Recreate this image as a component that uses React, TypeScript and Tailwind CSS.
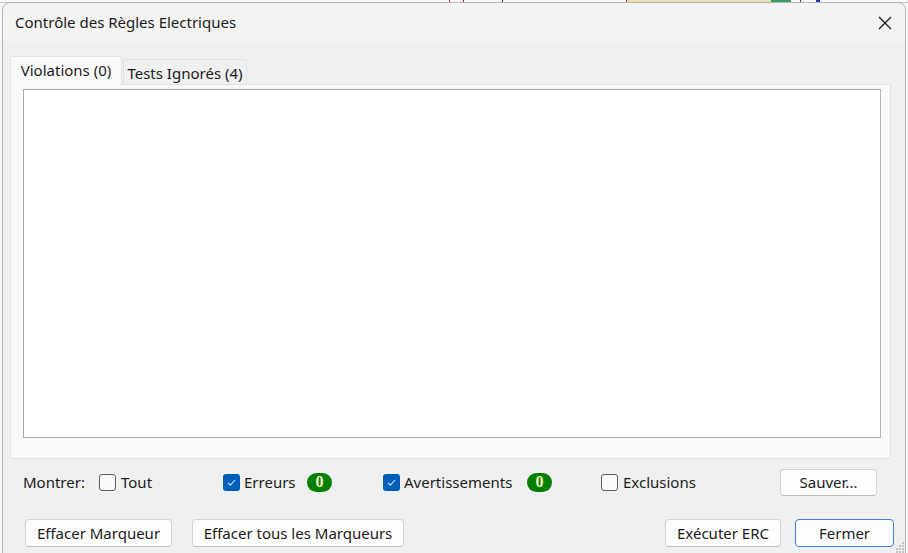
import React from 'react';

const font = { fontFamily: '"Segoe UI", "Noto Sans", "Open Sans", sans-serif' };

const Checkbox: React.FC<{ checked?: boolean }> = ({ checked }) =>
  checked ? (
    <span className="flex h-[17px] w-[17px] shrink-0 items-center justify-center rounded-[3px] bg-[#005fb8]">
      <svg width="11" height="11" viewBox="0 0 11 11" fill="none">
        <path d="M2 5.8 L4.4 8.2 L9 3" stroke="#cfe3f7" strokeWidth="1.1" />
      </svg>
    </span>
  ) : (
    <span className="h-[17px] w-[17px] shrink-0 rounded-[3px] border border-[#5c5c5c] bg-[#f9f9f9]" />
  );

const Badge: React.FC = () => (
  <span
    className="flex h-[19px] w-[25px] items-center justify-center rounded-full bg-[#008000] text-[16px] font-bold leading-none text-[#f4f4c0]"
    style={{ fontFamily: '"Liberation Serif", serif' }}
  >
    0
  </span>
);

const Button: React.FC<{ w: string; h?: string; primary?: boolean; children: React.ReactNode }> = ({
  w,
  h = 'h-[28px]',
  primary,
  children,
}) => (
  <button
    className={`${w} ${h} flex items-center justify-center rounded-[4px] border bg-[#fdfdfd] text-[15px] text-[#1b1b1b] ${
      primary ? 'border-[#3b82d8]' : 'border-[#d5d5d5] border-b-[#bfbfbf]'
    }`}
  >
    {children}
  </button>
);

export default function App() {
  return (
    <div className="relative h-[553px] w-[908px] overflow-hidden bg-[#f7f7f7]" style={font}>
      {/* underlying app strip */}
      <div className="absolute left-0 top-0 h-[3px] w-[908px] border-b border-[#c8c8c8]">
        <span className="absolute left-[449px] top-0 h-[3px] w-px bg-[#b03030]" />
        <span className="absolute left-[463px] top-0 h-[3px] w-px bg-[#b03030]" />
        <span className="absolute left-[502px] top-0 h-[3px] w-px bg-[#2020d0]" />
        <span className="absolute left-[626px] top-0 h-[3px] w-[145px] border-l border-[#b03030] bg-[#e8e2a8]" />
        <span className="absolute left-[771px] top-0 h-[3px] w-[20px] bg-[#3a9a60]" />
        <span className="absolute left-[800px] top-0 h-[3px] w-px bg-[#b03030]" />
        <span className="absolute left-[816px] top-0 h-[3px] w-[4px] bg-[#3030c0]" />
      </div>

      <div className="absolute left-[2px] top-[2px] flex h-[560px] w-[904px] flex-col rounded-t-[8px] border border-[#b4b4b4] bg-[#f0f0f0]">
        {/* title bar */}
        <div className="flex h-[39px] shrink-0 items-center justify-between rounded-t-[8px] bg-[#f3f3f3] pl-[12px] pr-[12px]">
          <span className="text-[15px] text-[#1b1b1b]">Contrôle des Règles Electriques</span>
          <svg width="16" height="16" viewBox="0 0 16 16">
            <path d="M2 2 L14 14 M14 2 L2 14" stroke="#1b1b1b" strokeWidth="1.3" />
          </svg>
        </div>

        {/* tabs */}
        <div className="ml-[7px] mt-[14px] flex h-[29px] items-end">
          <div className="relative z-10 flex h-[29px] w-[112px] items-start justify-center rounded-t-[3px] border border-b-0 border-[#e3e3e3] bg-[#f9f9f9] pt-[2px] text-[15px] text-[#1b1b1b]">
            Violations (0)
          </div>
          <div className="ml-px flex h-[26px] w-[124px] items-center justify-center border border-b-0 border-[#e3e3e3] bg-[#f0f0f0] pt-[1px] text-[15px] text-[#1b1b1b]">
            Tests Ignorés (4)
          </div>
        </div>
        <div className="-mt-px ml-[7px] mr-[14px] h-[375px] border border-[#e3e3e3] bg-[#f9f9f9] pb-[20px] pl-[12px] pr-[9px] pt-[4px]">
          <div className="h-full w-full border border-[#a8a8a8] border-r-[#b8b8b8] bg-white" />
        </div>

        {/* show row */}
        <div className="mt-[9px] flex h-[28px] items-center text-[15px] text-[#1b1b1b]">
          <span className="ml-[20px] w-[76px]">Montrer:</span>
          <div className="flex w-[124px] items-center gap-[5px]">
            <Checkbox />
            <span>Tout</span>
          </div>
          <div className="flex w-[160px] items-center gap-[4px]">
            <Checkbox checked />
            <span className="w-[59px]">Erreurs</span>
            <Badge />
          </div>
          <div className="flex w-[218px] items-center gap-[4px]">
            <Checkbox checked />
            <span className="w-[119px]">Avertissements</span>
            <Badge />
          </div>
          <div className="flex w-[179px] items-center gap-[5px]">
            <Checkbox />
            <span>Exclusions</span>
          </div>
          <Button w="w-[97px]" h="h-[27px]">Sauver...</Button>
        </div>

        {/* buttons row */}
        <div className="mt-[23px] flex items-center">
          <div className="ml-[22px]">
            <Button w="w-[147px]">Effacer Marqueur</Button>
          </div>
          <div className="ml-[20px]">
            <Button w="w-[212px]">Effacer tous les Marqueurs</Button>
          </div>
          <div className="ml-[261px]">
            <Button w="w-[116px]">Exécuter ERC</Button>
          </div>
          <div className="ml-[14px]">
            <Button w="w-[99px]" primary>
              Fermer
            </Button>
          </div>
        </div>
      </div>

      {/* resize grip */}
      <svg className="absolute right-[3px] bottom-0" width="12" height="14" viewBox="0 0 12 14">
        {[
          [9, 3],
          [6, 6],
          [9, 6],
          [3, 9],
          [6, 9],
          [9, 9],
          [3, 12],
          [6, 12],
          [9, 12],
        ].map(([x, y], i) => (
          <rect key={i} x={x} y={y} width="2" height="2" fill="#c4c4c4" />
        ))}
      </svg>
    </div>
  );
}
